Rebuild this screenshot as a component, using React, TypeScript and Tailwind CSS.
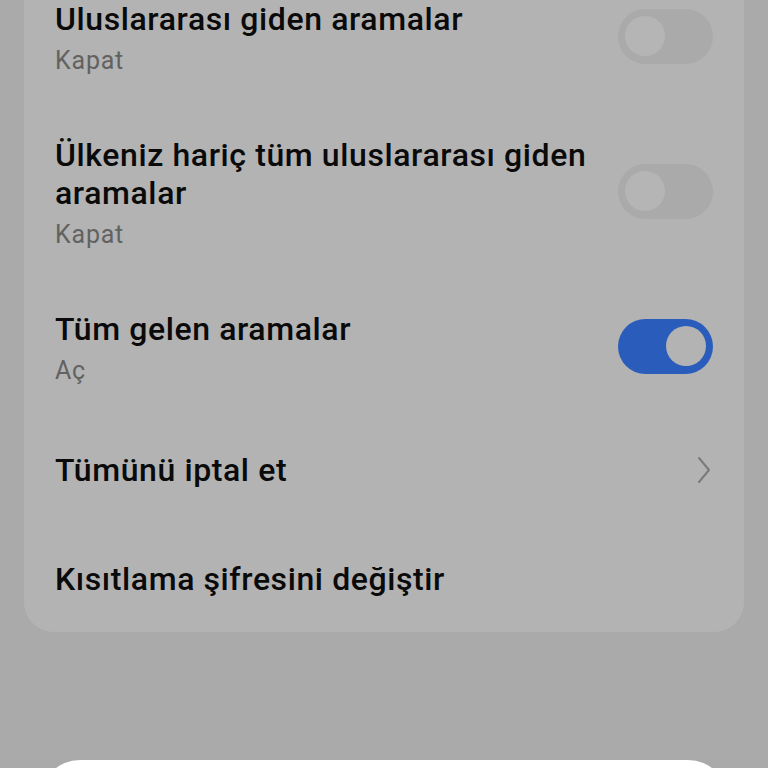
type Row = {
  title: string
  summary?: string
  control: 'off' | 'on' | 'chevron' | 'none'
}

const rows: Row[] = [
  { title: 'Uluslararası giden aramalar', summary: 'Kapat', control: 'off' },
  { title: 'Ülkeniz hariç tüm uluslararası giden aramalar', summary: 'Kapat', control: 'off' },
  { title: 'Tüm gelen aramalar', summary: 'Aç', control: 'on' },
  { title: 'Tümünü iptal et', control: 'chevron' },
  { title: 'Kısıtlama şifresini değiştir', control: 'none' },
]

function Toggle({ on }: { on: boolean }) {
  return (
    <div
      className={
        on
          ? 'mb-[5px] flex h-[55px] w-[95px] shrink-0 items-center justify-end rounded-full bg-[#2a5cbc] px-[7px]'
          : 'mb-[5px] flex h-[55px] w-[95px] shrink-0 items-center justify-start rounded-full bg-[#aaaaaa] px-[7px]'
      }
    >
      <div
        className={
          on
            ? 'h-[40px] w-[40px] rounded-full bg-[#b3b3b3]'
            : 'h-[40px] w-[40px] rounded-full bg-[#b5b5b5]'
        }
      />
    </div>
  )
}

function Chevron() {
  return (
    <svg width="16" height="28" viewBox="0 0 16 28" className="mr-[1px] shrink-0" fill="none">
      <path d="M3 2 L13 14 L3 26" stroke="#7a7a7a" strokeWidth="2" strokeLinecap="round" strokeLinejoin="round" />
    </svg>
  )
}

function SettingRow({ row, pad }: { row: Row; pad: string }) {
  return (
    <div className={`flex items-center justify-between ${pad}`}>
      <div className="min-w-0 flex-1 pr-[20px]">
        <div className="text-[32px] font-medium leading-[38px] tracking-[0.6px] text-[#0a0a0a]">{row.title}</div>
        {row.summary && (
          <div className="mt-[7px] text-[25px] leading-[32px] tracking-[0.8px] text-[#626262]">{row.summary}</div>
        )}
      </div>
      {row.control === 'off' && <Toggle on={false} />}
      {row.control === 'on' && <Toggle on />}
      {row.control === 'chevron' && <Chevron />}
    </div>
  )
}

export default function App() {
  return (
    <div
      className="flex h-[768px] w-[768px] flex-col overflow-hidden bg-[#aaaaaa]"
      style={{ fontFamily: 'Roboto, "Noto Sans", sans-serif' }}
    >
      <div className="mx-[24px] -mt-[30px] rounded-[30px] bg-[#b3b3b3] pl-[31px] pr-[31px]">
        <SettingRow row={rows[0]} pad="pt-[30px] pb-[29px]" />
        <SettingRow row={rows[1]} pad="pt-[30px] pb-[29px]" />
        <SettingRow row={rows[2]} pad="pt-[30px] pb-[29px]" />
        <SettingRow row={rows[3]} pad="pt-[35px] pb-[36px]" />
        <SettingRow row={rows[4]} pad="pt-[35px] pb-[34px]" />
      </div>
      <div className="mx-[40px] mt-[128px] h-[200px] shrink-0 rounded-t-[40px] bg-white" />
    </div>
  )
}
